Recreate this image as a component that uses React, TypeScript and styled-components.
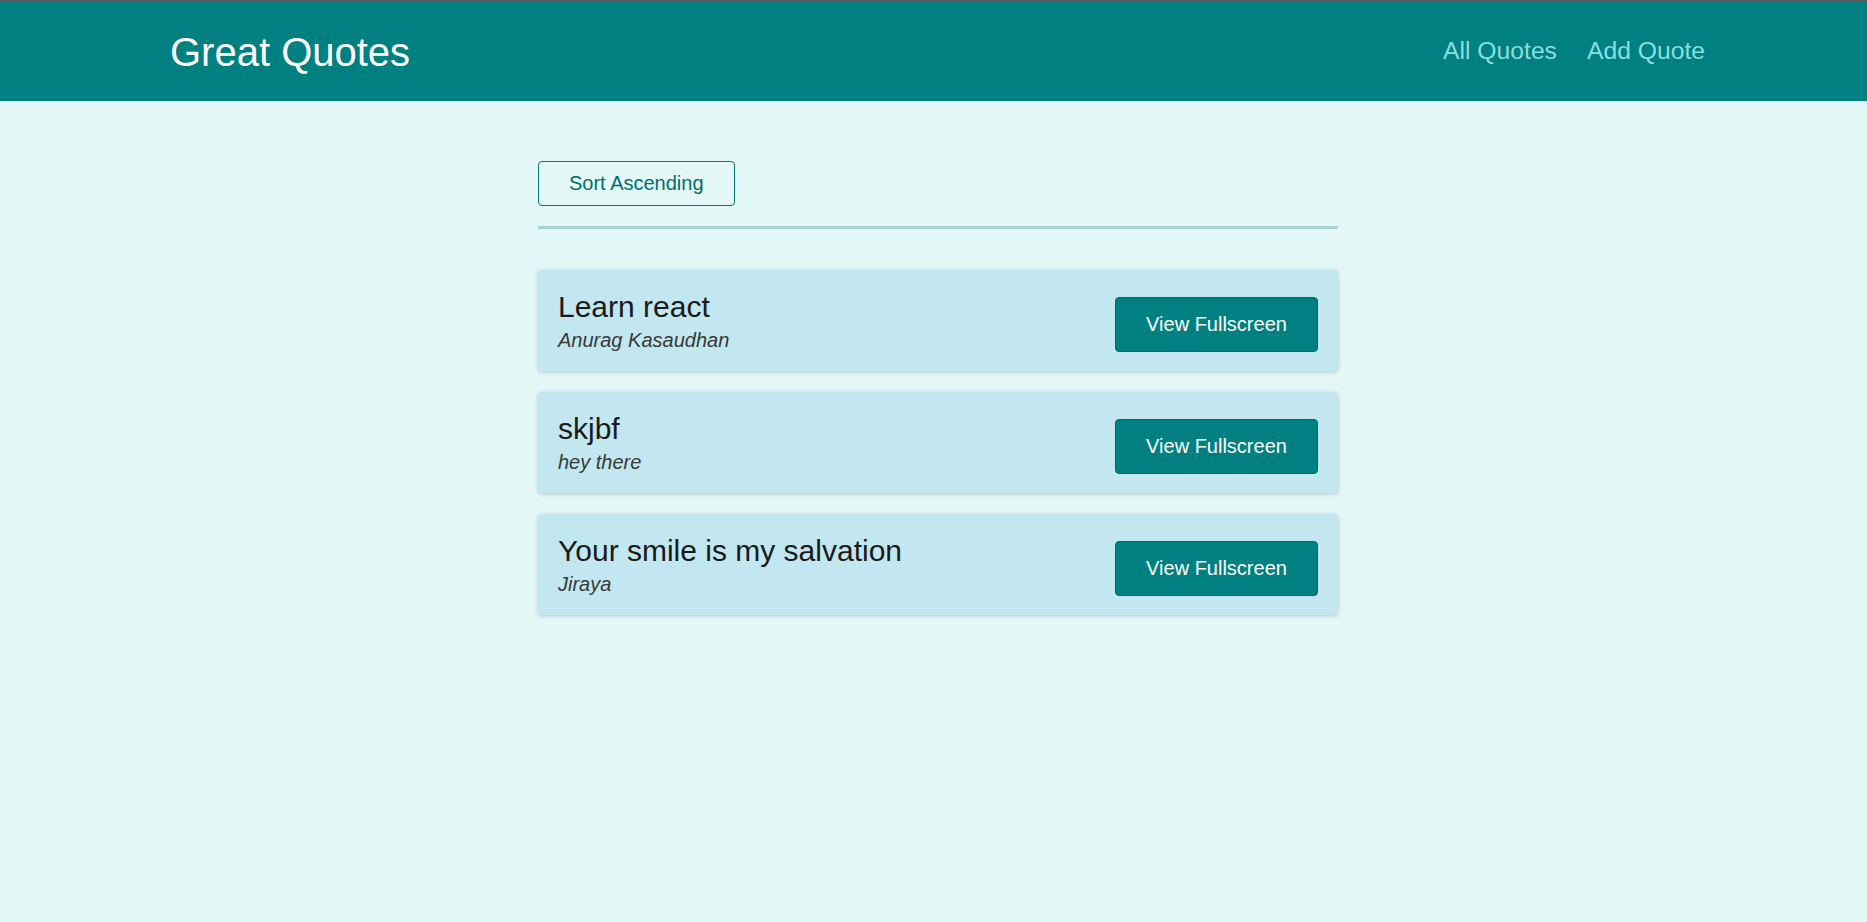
import React from "react";
import styled, { createGlobalStyle } from "styled-components";

const GlobalStyle = createGlobalStyle`
  * { box-sizing: border-box; }
  html, body { margin: 0; padding: 0; }
  body {
    font-family: "Liberation Sans", Arial, sans-serif;
    background: #e4f7f7;
    min-height: 100vh;
  }
`;

const Header = styled.header`
  height: 101px;
  border-top: 1px solid #5a5a5a;
  background: #008080;
  display: flex;
  align-items: center;
  justify-content: space-between;
  padding: 0 162px 0 170px;
`;

const Logo = styled.div`
  font-size: 40px;
  color: #ffffff;
  line-height: 1;
  margin-top: 2px;
`;

const NavList = styled.ul`
  list-style: none;
  margin: 0;
  padding: 0;
  display: flex;
  gap: 30px;
`;

const NavLink = styled.a`
  text-decoration: none;
  font-size: 24.7px;
  color: #88dfdf;
`;

const Main = styled.main`
  width: 800px;
  margin: 40px 0 0 538px;
`;

const Sorting = styled.div`
  padding: 20px 0;
  border-bottom: 3px solid #a9d3d3;
`;

const SortButton = styled.button`
  font: inherit;
  font-size: 20px;
  color: #006f70;
  background: transparent;
  border: 1px solid #007878;
  border-radius: 4px;
  padding: 0 30px;
  height: 45px;
  cursor: pointer;
`;

const List = styled.ul`
  list-style: none;
  margin: 41px 0 0;
  padding: 0;
  display: flex;
  flex-direction: column;
  gap: 21px;
`;

const Item = styled.li`
  height: 101px;
  display: flex;
  align-items: center;
  justify-content: space-between;
  padding: 0 20px;
  background: #c2e7f0;
  border-radius: 4px;
  box-shadow: 0 1px 4px rgba(0, 0, 0, 0.2);
`;

const Figure = styled.figure`
  margin: 0;
  display: flex;
  flex-direction: column;
`;

const Quote = styled.blockquote`
  margin: 0;
  font-size: 30px;
  line-height: 34px;
  color: #1a1a1a;
`;

const Caption = styled.figcaption`
  margin-top: 5px;
  font-size: 20px;
  line-height: 23px;
  font-style: italic;
  color: #383838;
`;

const FullButton = styled.a`
  display: inline-flex;
  align-items: center;
  justify-content: center;
  width: 203px;
  height: 55px;
  margin-top: 7px;
  text-decoration: none;
  font-size: 20px;
  color: #ffffff;
  background: #008080;
  border: 1px solid #006b6b;
  border-radius: 4px;
`;

const quotes = [
  { text: "Learn react", author: "Anurag Kasaudhan" },
  { text: "skjbf", author: "hey there" },
  { text: "Your smile is my salvation", author: "Jiraya" },
];

export default function App() {
  return (
    <>
      <GlobalStyle />
      <Header>
        <Logo>Great Quotes</Logo>
        <nav>
          <NavList>
            <li><NavLink href="#">All Quotes</NavLink></li>
            <li><NavLink href="#">Add Quote</NavLink></li>
          </NavList>
        </nav>
      </Header>
      <Main>
        <Sorting>
          <SortButton>Sort Ascending</SortButton>
        </Sorting>
        <List>
          {quotes.map((q) => (
            <Item key={q.text}>
              <Figure>
                <Quote>{q.text}</Quote>
                <Caption>{q.author}</Caption>
              </Figure>
              <FullButton href="#">View Fullscreen</FullButton>
            </Item>
          ))}
        </List>
      </Main>
    </>
  );
}
